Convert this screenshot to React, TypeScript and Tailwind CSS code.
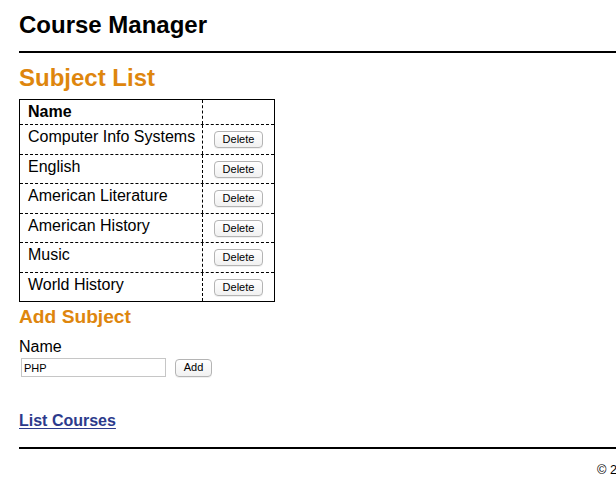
export default function App() {
    const subjects = [
        "Computer Info Systems",
        "English",
        "American Literature",
        "American History",
        "Music",
        "World History",
    ];

    return (
        <div className="w-[616px] min-h-[495px] overflow-hidden bg-white text-black font-['Liberation_Sans',Arial,sans-serif]">
            <div className="w-[800px] pl-[19px]">

                <header className="pt-[11px] pb-[12px] border-b-2 border-black">
                    <h1 className="text-[24px] leading-[28px] font-bold">Course Manager</h1>
                </header>

                <main>
                    <h2 className="mt-[11px] text-[24px] leading-[28px] font-bold text-[#de860d]">Subject List</h2>

                    <div className="mt-[7px] w-[256px] border border-black">
                        <div className="flex h-[24px]">
                            <div className="w-[183px] border-r border-dashed border-black pl-[8px] pt-[3px] text-[16px] leading-[18px] font-bold">
                                Name
                            </div>
                            <div className="flex-1"></div>
                        </div>
                        {subjects.map((s, i) => (
                            <div
                                key={s}
                                className={
                                    "flex border-t border-dashed border-black " +
                                    (i % 2 === 0 ? "h-[30px]" : "h-[29px]")
                                }
                            >
                                <div className="w-[183px] border-r border-dashed border-black pl-[8px] pt-[3px] text-[16px] leading-[18px]">
                                    {s}
                                </div>
                                <div className="flex-1 flex items-start pl-[11px] pt-[6px]">
                                    <button className="w-[49px] h-[17px] rounded-[4px] border border-[#b4b4b4] bg-gradient-to-b from-white to-[#f1f1f1] text-[11px] leading-[15px] text-black shadow-[0_1px_0_rgba(0,0,0,0.06)]">
                                        Delete
                                    </button>
                                </div>
                            </div>
                        ))}
                    </div>

                    <h2 className="mt-[4px] text-[19.2px] leading-[22px] font-bold text-[#de860d]">Add Subject</h2>

                    <form className="mt-[10px]">
                        <label className="block text-[16px] leading-[18px]">Name</label>
                        <div className="mt-[2px] flex items-center">
                            <input
                                type="text"
                                defaultValue="PHP"
                                className="ml-[2px] w-[145px] h-[19px] border border-[#c6c6c6] px-[2px] text-[11px] leading-[15px] outline-none"
                            />
                            <button
                                type="button"
                                className="ml-[9px] w-[37px] h-[18px] rounded-[4px] border border-[#b4b4b4] bg-gradient-to-b from-white to-[#f1f1f1] text-[11px] leading-[15px] text-black shadow-[0_1px_0_rgba(0,0,0,0.06)]"
                            >
                                Add
                            </button>
                        </div>
                    </form>

                    <p className="mt-[35px] text-[16px] leading-[18px] font-bold">
                        <a href="#" className="text-[#2c3a8c] underline underline-offset-[2px]">List Courses</a>
                    </p>
                </main>

                <footer className="mt-[17px] border-t-2 border-black">
                    <p className="mt-[13px] pl-[578px] whitespace-nowrap text-[12.8px] leading-[15px]">
                        © 2017 Course Manager, Inc.
                    </p>
                </footer>

            </div>
        </div>
    );
}
